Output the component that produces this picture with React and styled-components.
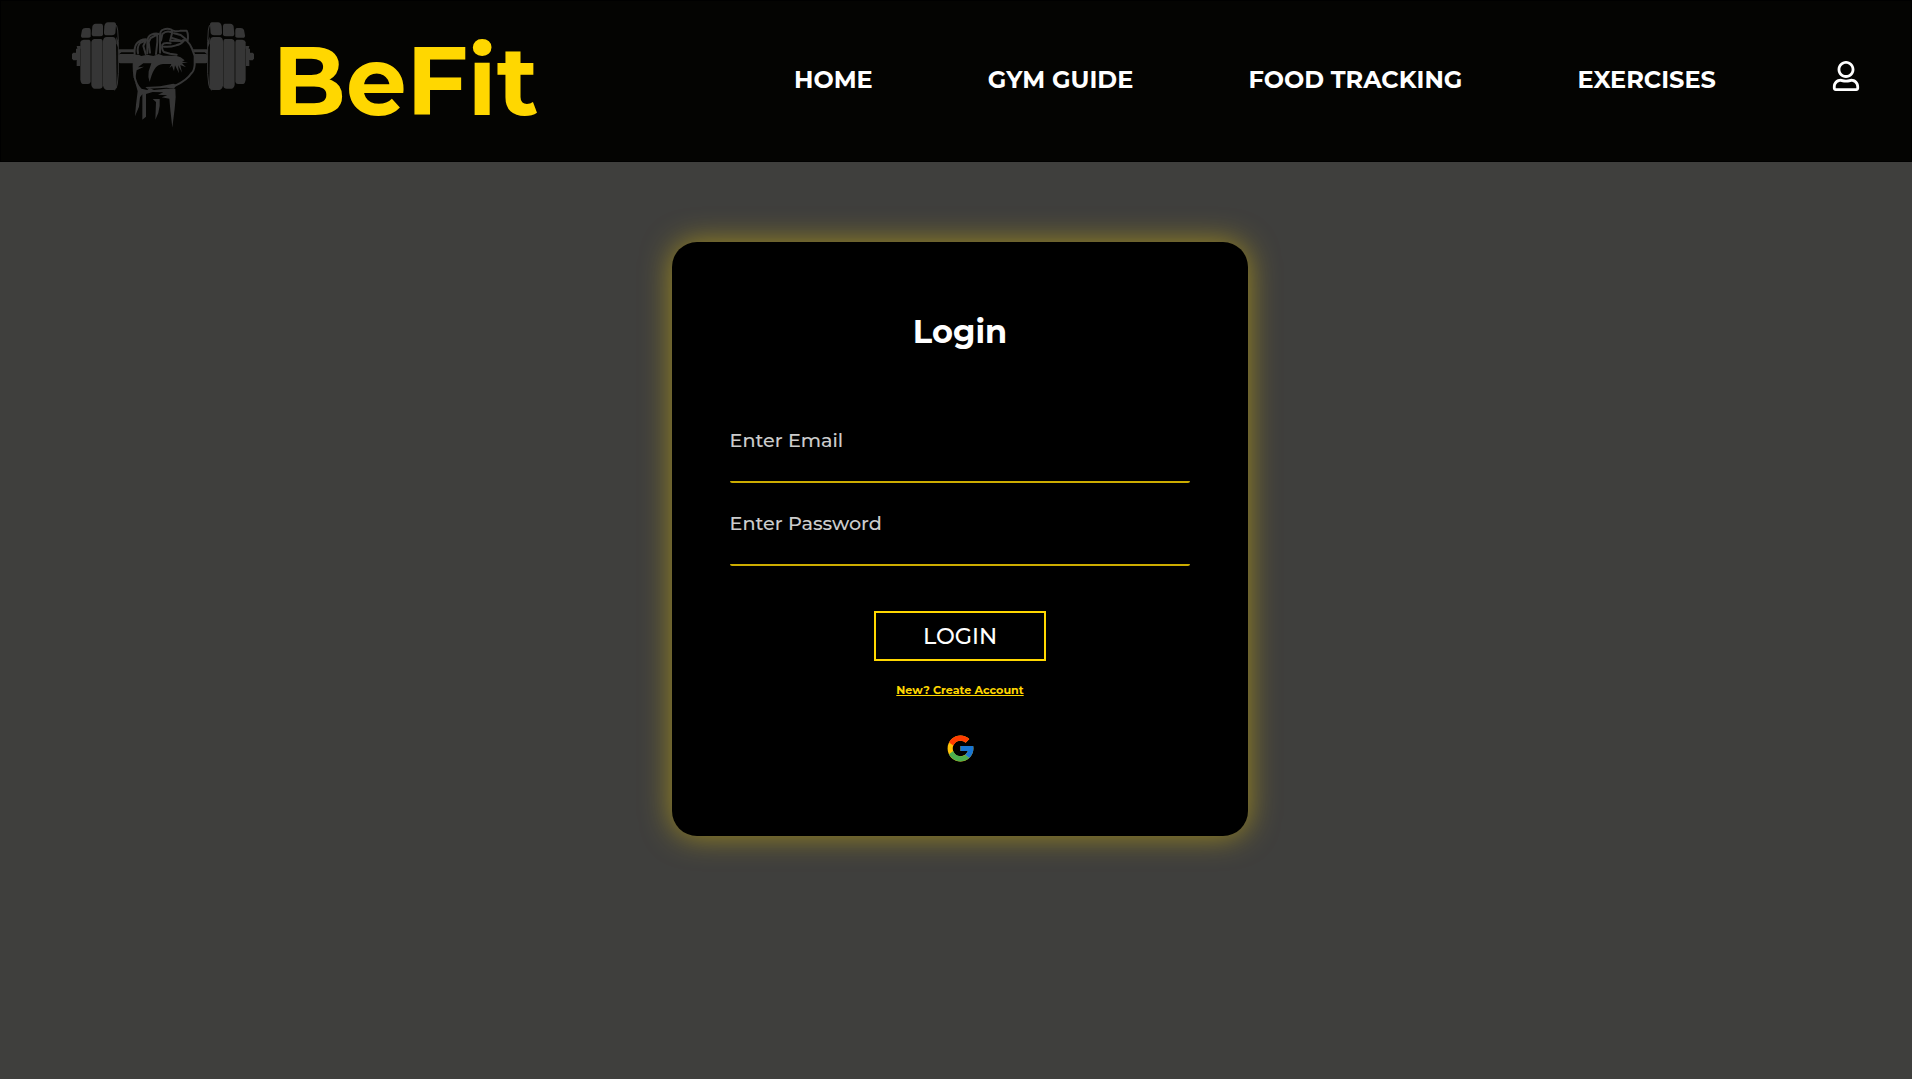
import React from "react";
import styled, { createGlobalStyle } from "styled-components";
import { FaRegUser } from "react-icons/fa";
import { FcGoogle } from "react-icons/fc";

const GlobalStyle = createGlobalStyle`
  *, *::before, *::after { box-sizing: border-box; }
  body {
    margin: 0;
    min-height: 100vh;
    background: #3f3f3d;
    font-family: "Montserrat", "Inter", sans-serif;
    color: #fff;
  }
`;

const Page = styled.div`
  display: flex;
  flex-direction: column;
  width: 1920px;
  max-width: 100vw;
  min-height: 100vh;
  overflow: hidden;
`;

const Header = styled.header`
  display: flex;
  align-items: center;
  height: 162px;
  padding: 0 50px 0 59px;
  background: #040402;
  border: 1px solid #000;
`;

const Brand = styled.a`
  display: flex;
  align-items: center;
  color: #ffd700;
  text-decoration: none;
`;

const BrandName = styled.span`
  margin-left: 2.5px;
  font-size: 96px;
  font-weight: 700;
  line-height: 118px;
`;

const LogoArt = styled.svg`
  display: block;
  width: 210px;
  height: 130px;
  margin-top: -12px;
  fill: #363636;
  stroke: none;
`;

const Nav = styled.nav`
  display: flex;
  align-items: center;
  gap: 115.2px;
  margin-left: auto;
`;

const NavLink = styled.a`
  color: #fff;
  font-size: 24px;
  font-weight: 700;
  line-height: 30px;
  margin-top: -2px;
  text-decoration: none;
  white-space: nowrap;
`;

const ProfileLink = styled.a`
  display: flex;
  color: #fff;
  font-size: 30px;
  margin-top: -11px;
`;

const Main = styled.main`
  padding: 80px 0 0 672px;
`;

const Card = styled.form`
  display: flex;
  flex-direction: column;
  align-items: center;
  width: 576px;
  height: 594px;
  padding: 70px 57.6px 0;
  border-radius: 25px;
  background: #000;
  box-shadow: 0 0 30px rgba(255, 215, 0, 0.5);
`;

const Title = styled.h1`
  margin: 0 0 48px;
  font-size: 32px;
  font-weight: 700;
  line-height: 40px;
`;

const Field = styled.input`
  display: block;
  width: 100%;
  height: 83px;
  padding: 28px 0 29px;
  border: 0;
  border-bottom: 2px solid #ffd700;
  border-radius: 2px;
  outline: none;
  background: transparent;
  color: #fff;
  font: 500 19.2px/24px "Montserrat", "Inter", sans-serif;
  opacity: 0.8;

  &::placeholder { color: #fff; opacity: 1; }
`;

const SubmitButton = styled.button`
  width: 172px;
  height: 50px;
  margin: 45px 0 19px;
  padding: 0;
  border: 2px solid #ffd700;
  background: transparent;
  color: #fff;
  font: 500 22.4px/28px "Montserrat", "Inter", sans-serif;
`;

const SignUpLink = styled.a`
  margin-bottom: 32.5px;
  color: #ffd700;
  font-size: 11.2px;
  font-weight: 700;
  line-height: 20px;
  text-decoration: underline;
`;

const GoogleButton = styled.a`
  display: flex;
  font-size: 31px;
`;

function Weights() {
  return (
    <g>
      <path d="M36 132L40 128H48V151H40L36 146Z" />
      <path d="M50 108H62V116H60V168H50V150H48V116H52Z" />
      <path d="M66 60Q68 54 76 54H88Q92 55 92 60V80Q91 83 84 83H66Q62 82 63 76Z" />
      <path d="M61 96Q63 90 71 89H88Q92 90 92 98V215Q91 222 84 222H68Q62 220 61 208Z" />
      <path d="M97 50Q98 42 107 41H124Q129 42 129 48V74Q128 79 120 79H100Q95 78 95 72Z" />
      <path d="M94 96Q95 88 102 87H124Q128 88 128 96V228Q127 236 118 236H104Q96 235 94 224Z" />
      <path d="M133 48Q135 38 144 37H162Q169 38 168 46L166 70Q164 76 156 76H138Q131 75 132 66Z" />
      <path d="M129 92Q130 82 140 81H158Q167 82 168 92L170 226Q169 240 160 240H140Q131 239 129 226Z" />
      <path d="M162 39Q172 44 173 60L175 94V190L172 222Q170 238 162 241" fill="none" stroke="#363636" strokeWidth="3" />
      <path d="M169 80L174 92V112L169 100Z" />
      <path d="M174 120Q175 117 182 118H232V127H184L177 133ZM175 137Q175 132 180 132H234V160H182Q176 160 175 152Z" />
    </g>
  );
}

function DumbbellLogo() {
  return (
    <LogoArt viewBox="0 0 630 390" aria-hidden="true">
      <Weights />
      <g transform="translate(618 0) scale(-1 1)">
        <Weights />
      </g>
      <path d="M222 130L224 108L240 90L262 84L272 73L298 70L304 60L326 54L340 62L380 62L386 90L396 108L405 138L403 182L384 206L344 230L258 238L236 225L222 190Z" fill="#040402" />
      <g fill="none" stroke="#363636" strokeWidth="6" strokeLinecap="round" strokeLinejoin="round">
        <path d="M224 132Q222 112 230 101Q240 88 258 88M240 99L258 91M240 99Q230 112 234 130M258 91L250 108L257 132" />
        <path d="M262 130V92Q264 78 274 74Q286 69 297 72M272 84L292 74V96L288 132M272 84L266 96L270 128" />
        <path d="M300 128V76Q300 62 310 59Q322 54 334 59Q339 62 336 70L331 90M307 72Q318 62 332 66M307 72L303 92" />
        <path d="M340 62Q350 66 362 62L380 62Q386 74 383 92M342 70L362 75L378 88M336 84L362 92" />
        <path d="M330 92L364 93Q372 88 380 92Q392 104 396 116L404 138V165Q402 184 394 190Q382 210 346 227L330 232" />
        <path d="M332 100Q312 96 307 104Q304 118 312 126L330 131L350 134M312 110Q330 112 348 106Q362 104 372 92" />
        <path d="M223 134Q219 170 223 196Q227 222 242 238" />
      </g>
      <path d="M222 134H236L244 138L262 134L280 138L296 132L310 137H348L362 142L374 151L366 155L384 157L366 160L378 172L361 165L366 188L354 166L357 190L345 166L342 184L336 167L328 175L334 162H309Q292 163 284 177Q275 191 269 216Q263 200 266 184L274 160H250L234 172L252 170L230 181L226 204H221Z" />
      <path d="M256 231L300 229L340 221L350 224L342 236L320 233L262 236Z" />
      <path d="M226 218L244 236L262 240L268 234L282 240L318 236H346L347 262L344 296L337 353L331 300L328 266L305 262L322 256L294 254L310 247L278 246L268 249L258 252V320L247 329V253L240 262L237 290L225 319L228 284L233 244Z" />
      <path d="M278 267H299V288Q297 310 286 329L288 276Z" />
    </LogoArt>
  );
}

const links = ["HOME", "GYM GUIDE", "FOOD TRACKING", "EXERCISES"];

export default function App() {
  return (
    <>
      <GlobalStyle />
      <Page>
        <Header>
          <Brand href="#">
            <DumbbellLogo />
            <BrandName>BeFit</BrandName>
          </Brand>
          <Nav>
            {links.map((label) => (
              <NavLink key={label} href="#">{label}</NavLink>
            ))}
            <ProfileLink href="#" aria-label="Profile">
              <FaRegUser />
            </ProfileLink>
          </Nav>
        </Header>
        <Main>
          <Card>
            <Title>Login</Title>
            <Field type="email" placeholder="Enter Email" />
            <Field type="password" placeholder="Enter Password" />
            <SubmitButton type="button">LOGIN</SubmitButton>
            <SignUpLink href="#">New? Create Account</SignUpLink>
            <GoogleButton href="#" aria-label="Sign in with Google">
              <FcGoogle />
            </GoogleButton>
          </Card>
        </Main>
      </Page>
    </>
  );
}
